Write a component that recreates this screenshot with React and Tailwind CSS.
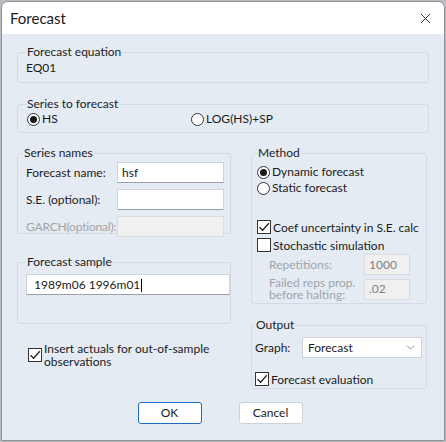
import { X, ChevronDown } from "lucide-react";

const font = { fontFamily: 'Lato, "Noto Sans", Arial, sans-serif' };

function Group({ title, className = "", legendClass = "", children }) {
  return (
    <fieldset className={`min-w-0 rounded-[3px] border border-[#d3dae3] ${className}`}>
      <legend className={`px-[1px] text-[12px] leading-[14px] text-[#1b1b1b] ${legendClass}`}>{title}</legend>
      {children}
    </fieldset>
  );
}

function Radio({ checked, label, className = "" }) {
  return (
    <div className={`flex items-center gap-[2px] ${className}`}>
      <span className="flex h-[13px] w-[13px] items-center justify-center rounded-full border border-[#333] bg-white">
        {checked && <span className="h-[7px] w-[7px] rounded-full bg-[#1a1a1a]" />}
      </span>
      <span className="text-[12px] leading-[16px]">{label}</span>
    </div>
  );
}

function Check({ checked, children, className = "" }) {
  return (
    <div className={`flex items-center gap-[2px] ${className}`}>
      <span className="flex h-[14px] w-[14px] shrink-0 items-center justify-center border border-[#333] bg-white">
        {checked && (
          <svg width="12" height="12" viewBox="0 0 12 12" fill="none">
            <path d="M1.5 6.2 L4.6 9.3 L10.8 2.2" stroke="#222" strokeWidth="1.3" />
          </svg>
        )}
      </span>
      <span className="whitespace-nowrap text-[12px] leading-[13px]">{children}</span>
    </div>
  );
}

function Field({ value = "", disabled = false, className = "" }) {
  return (
    <div
      className={`flex h-[21px] shrink-0 items-center border px-[4px] text-[12px] ${
        disabled ? "border-[#dcdcdc] bg-[#f0f0f0]" : "border-[#cfd3d8] border-b-[#9aa0a6] bg-white"
      } ${className}`}
    >
      {value}
    </div>
  );
}

export default function App() {
  return (
    <div className="h-[442px] w-[446px] bg-[#b9bcc0] p-[1px] text-[#1b1b1b]" style={font}>
      <div className="flex h-[440px] flex-col overflow-hidden rounded-t-[7px] border border-[#8d8f92] bg-[#e5ebf3]">
        <div className="flex h-[32px] shrink-0 items-center justify-between bg-white pl-[8px] pr-[10px]">
          <span className="text-[15px]">Forecast</span>
          <X size={17} strokeWidth={1.3} className="text-[#222]" />
        </div>

        <div className="flex flex-1 flex-col px-[15px] pt-[11px]">
          <Group title="Forecast equation" className="h-[38px] px-[8px]">
            <div className="pt-[1px] text-[12px] leading-[16px]">EQ01</div>
          </Group>

          <Group title="Series to forecast" className="mt-[14px] h-[36px] px-[9px]" legendClass="-ml-[1px]">
            <div className="flex">
              <Radio checked label="HS" className="w-[164px]" />
              <Radio label="LOG(HS)+SP" />
            </div>
          </Group>

          <div className="mt-[13px] flex gap-[20px]">
            <div className="flex w-[214px] flex-col">
              <Group title="Series names" className="h-[88px] pl-[8px] pr-[6px]" legendClass="-ml-[3px]">
                <div className="flex flex-col gap-[6px] pt-[2px]">
                  <div className="flex items-center">
                    <span className="w-[91px] text-[12px]">Forecast name:</span>
                    <Field value="hsf" className="flex-1" />
                  </div>
                  <div className="flex items-center">
                    <span className="w-[91px] text-[12px]">S.E. (optional):</span>
                    <Field className="flex-1" />
                  </div>
                  <div className="flex items-center">
                    <span className="w-[91px] whitespace-nowrap text-[12px] tracking-[-0.2px] text-[#a0a4a8]">GARCH(optional):</span>
                    <Field disabled className="flex-1" />
                  </div>
                </div>
              </Group>

              <Group title="Forecast sample" className="mt-[21px] h-[69px] pl-[8px]">
                <Field value={<span>1989m06 1996m01<span className="ml-[1px] inline-block h-[13px] w-[1px] bg-black align-middle" /></span>} className="mt-[5px] pl-[7px]" />
              </Group>

              <Check checked className="ml-[11px] mt-[18px]">
                Insert actuals for out-of-sample
                <br />
                observations
              </Check>
            </div>

            <div className="flex w-[176px] flex-col">
              <Group title="Method" className="h-[158px] pl-[5px] pr-[16px]">
                <div className="flex flex-col pt-[4px]">
                  <Radio checked label="Dynamic forecast" />
                  <Radio label="Static forecast" />
                  <Check checked className="mt-[24px]">Coef uncertainty in S.E. calc</Check>
                  <Check className="mt-[4px]">Stochastic simulation</Check>
                  <div className="mt-[2px] flex items-center justify-between pl-[12px]">
                    <span className="text-[12px] text-[#a0a4a8]">Repetitions:</span>
                    <Field disabled value={<span className="text-[#808080]">1000</span>} className="h-[19px] w-[46px]" />
                  </div>
                  <div className="mt-[2px] flex items-center justify-between pl-[12px]">
                    <span className="whitespace-nowrap text-[12px] leading-[12px] text-[#a0a4a8]">
                      Failed reps prop.
                      <br />
                      before halting:
                    </span>
                    <Field disabled value={<span className="text-[#808080]">.02</span>} className="w-[46px]" />
                  </div>
                </div>
              </Group>

              <Group title="Output" className="mt-[14px] h-[71px] pl-[3px] pr-[4px]">
                <div className="flex items-center pt-[5px]">
                  <span className="w-[47px] text-[12px]">Graph:</span>
                  <div className="flex h-[21px] flex-1 items-center justify-between border border-[#d0d4d9] bg-white pl-[5px] pr-[4px] text-[12px]">
                    Forecast
                    <ChevronDown size={13} strokeWidth={1.3} className="text-[#666]" />
                  </div>
                </div>
                <Check checked className="mt-[14px]">Forecast evaluation</Check>
              </Group>
            </div>
          </div>

          <div className="mt-[13px] flex justify-center gap-[37px] pr-[6px]">
            <button className="h-[22px] w-[64px] rounded-[3px] border border-[#1a6cc4] bg-white text-[12px]">OK</button>
            <button className="h-[22px] w-[64px] rounded-[3px] border border-[#cdd1d6] bg-white text-[12px]">Cancel</button>
          </div>
        </div>
      </div>
    </div>
  );
}
